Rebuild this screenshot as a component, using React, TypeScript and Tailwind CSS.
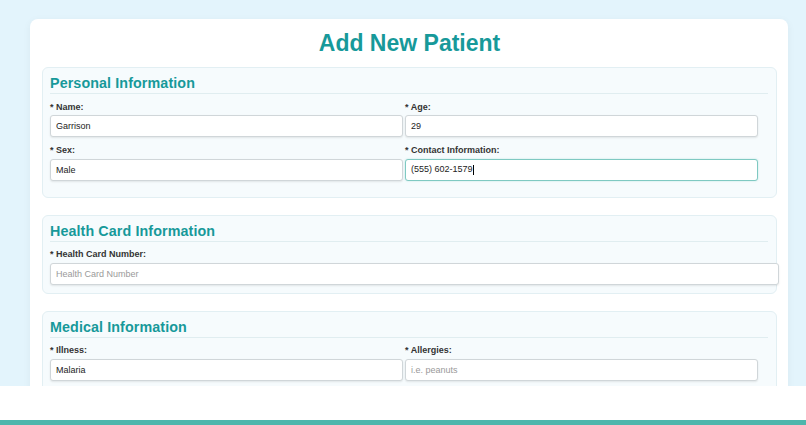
import React from "react";

const inputCls =
  "block w-full h-[22px] box-border border border-[#d0d6d9] rounded-[3px] bg-white pl-[5px] text-[9px] text-[#222] shadow-[0_1px_2px_rgba(0,0,0,0.09)] outline-none placeholder:text-[#9a9a9a]";

function Label({ children }: { children: React.ReactNode }) {
  return (
    <div className="text-[9px] leading-[11px] font-bold text-[#333] mb-[2.5px] whitespace-nowrap">
      * {children}
    </div>
  );
}

function Field({
  label,
  value,
  placeholder,
}: {
  label: string;
  value?: string;
  placeholder?: string;
}) {
  return (
    <div>
      <Label>{label}:</Label>
      <input className={inputCls} defaultValue={value} placeholder={placeholder} readOnly />
    </div>
  );
}

function Section({
  title,
  children,
  pb,
}: {
  title: string;
  children: React.ReactNode;
  pb: string;
}) {
  return (
    <section
      className={`border border-[#e2eff3] rounded-[6px] bg-[#f6fbfd] pl-[7px] pr-[8px] pt-[6px] ${pb}`}
    >
      <h2 className="text-[14.3px] leading-[18px] font-bold text-[#17999a] tracking-[0.1px] pb-[1px] border-b border-[#e0edf0] mb-[7.5px]">
        {title}
      </h2>
      {children}
    </section>
  );
}

export default function App() {
  return (
    <div className="w-[806px] h-[425px] overflow-hidden font-['Liberation_Sans',Arial,sans-serif]">
      <div className="h-[386px] overflow-hidden bg-[#e3f4fc] pl-[30px] pt-[19px]">
        <div className="w-[758px] h-[500px] bg-white rounded-[8px] shadow-[0_2px_8px_rgba(0,0,0,0.05)] pt-[10px] pl-[12px] pr-[11px]">
          <h1 className="text-[23px] leading-[28px] font-bold text-[#17999a] text-center mb-[10px]">
            Add New Patient
          </h1>
          <div className="flex flex-col gap-[17px]">
            <Section title="Personal Information" pb="pb-[16px]">
              <div className="grid grid-cols-[353px_353px] gap-x-[2px] gap-y-[8px]">
                <Field label="Name" value="Garrison" />
                <Field label="Age" value="29" />
                <Field label="Sex" value="Male" />
                <div>
                  <Label>Contact Information:</Label>
                  <div className="flex items-center h-[22px] border border-[#7fc9c2] rounded-[3px] bg-white pl-[5px] text-[9px] text-[#222] shadow-[0_0_2px_rgba(77,182,172,0.35)]">
                    <span>(555) 602-1579</span>
                    <span className="inline-block w-[1px] h-[10px] bg-black" />
                  </div>
                </div>
              </div>
            </Section>
            <Section title="Health Card Information" pb="pb-[8px]">
              <Label>Health Card Number:</Label>
              <input
                className="block w-[729px] h-[22px] box-border border border-[#d0d6d9] rounded-[3px] bg-white pl-[5px] text-[9px] text-[#222] shadow-[0_1px_2px_rgba(0,0,0,0.09)] outline-none placeholder:text-[#9a9a9a]"
                placeholder="Health Card Number"
                readOnly
              />
            </Section>
            <Section title="Medical Information" pb="pb-[16px]">
              <div className="grid grid-cols-[353px_353px] gap-x-[2px] gap-y-[8px]">
                <Field label="Illness" value="Malaria" />
                <Field label="Allergies" placeholder="i.e. peanuts" />
              </div>
            </Section>
          </div>
        </div>
      </div>
      <div className="h-[34px] bg-white" />
      <div className="h-[5px] bg-[#4db6ac]" />
    </div>
  );
}
